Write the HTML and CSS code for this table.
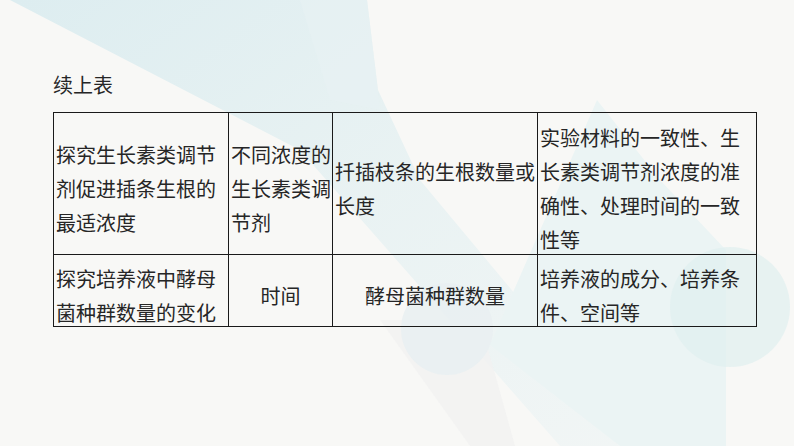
FILE: index.html
```html
<!DOCTYPE html>
<html lang="zh-CN">
<head>
<meta charset="utf-8">
<title>续上表</title>
<link rel="stylesheet" href="styles.css">
</head>
<body>
<div class="slide">
  <svg class="deco" width="794" height="446" viewBox="0 0 794 446" aria-hidden="true">
    <defs>
      <linearGradient id="band" x1="0" y1="0" x2="1" y2="1">
        <stop offset="0" stop-color="#d8ebef"/>
        <stop offset="0.5" stop-color="#e6f1f2"/>
        <stop offset="1" stop-color="#f0f5f5"/>
      </linearGradient>
    </defs>
    <polygon points="10,0 367,0 378,90 420,180 520,300 620,446 560,446 300,150" fill="url(#band)" opacity="0.85"/>
    <polygon points="300,0 367,0 380,110 330,100" fill="#e8f2f3" opacity="0.6"/>
    <polygon points="597,100 660,180 726,250 726,446 620,446 490,345" fill="#ebf4f4"/>
    <polygon points="380,320 480,320 515,446 470,446" fill="#f1f1f1" opacity="0.8"/>
    <circle cx="447" cy="329" r="46" fill="#e9eff2" opacity="0.9"/>
    <circle cx="730" cy="307" r="60" fill="#dff0ef" opacity="0.7"/>
  </svg>
  <div class="content">
    <p class="caption">续上表</p>
    <table class="grid">
      <colgroup>
        <col class="c1"><col class="c2"><col class="c3"><col class="c4">
      </colgroup>
      <tbody>
        <tr class="r1">
          <td><div class="t">探究生长素类调节<br>剂促进插条生根的<br>最适浓度</div></td>
          <td><div class="t">不同浓度的<br>生长素类调<br>节剂</div></td>
          <td><div class="t">扦插枝条的生根数量或<br>长度</div></td>
          <td><div class="t">实验材料的一致性、生<br>长素类调节剂浓度的准<br>确性、处理时间的一致<br>性等</div></td>
        </tr>
        <tr class="r2">
          <td><div class="t">探究培养液中酵母<br>菌种群数量的变化</div></td>
          <td class="mid"><div class="t">时间</div></td>
          <td class="mid"><div class="t">酵母菌种群数量</div></td>
          <td><div class="t">培养液的成分、培养条<br>件、空间等</div></td>
        </tr>
      </tbody>
    </table>
  </div>
</div>
</body>
</html>
```

FILE: styles.css
```css
html, body {
  margin: 0;
  padding: 0;
}

body {
  background: #f8f8f6;
  font-family: "Noto Sans CJK SC", "Noto Sans", sans-serif;
  color: #262626;
}

.slide {
  position: relative;
  width: 794px;
  height: 446px;
  overflow: hidden;
  background: #f8f8f6;
}

.deco {
  position: absolute;
  left: 0;
  top: 0;
}

.content {
  position: relative;
  padding: 67px 0 0 53px;
}

.caption {
  margin: 0 0 10px 0;
  font-size: 20px;
  line-height: 35px;
  height: 35px;
}

.grid {
  border-collapse: collapse;
  table-layout: fixed;
  width: 703px;
  font-size: 20px;
  line-height: 34px;
}

.grid .c1 { width: 175px; }
.grid .c2 { width: 104px; }
.grid .c3 { width: 205px; }
.grid .c4 { width: 219px; }

.grid td {
  border: 1px solid #1a1a1a;
  padding: 0 0 0 2px;
  vertical-align: middle;
  white-space: nowrap;
}

.grid td.mid {
  text-align: center;
  padding: 0;
}

.grid .t {
  margin-top: 5px;
  margin-bottom: -5px;
}

.grid .r1 td { height: 141px; }
.grid .r2 td { height: 71px; }
```
